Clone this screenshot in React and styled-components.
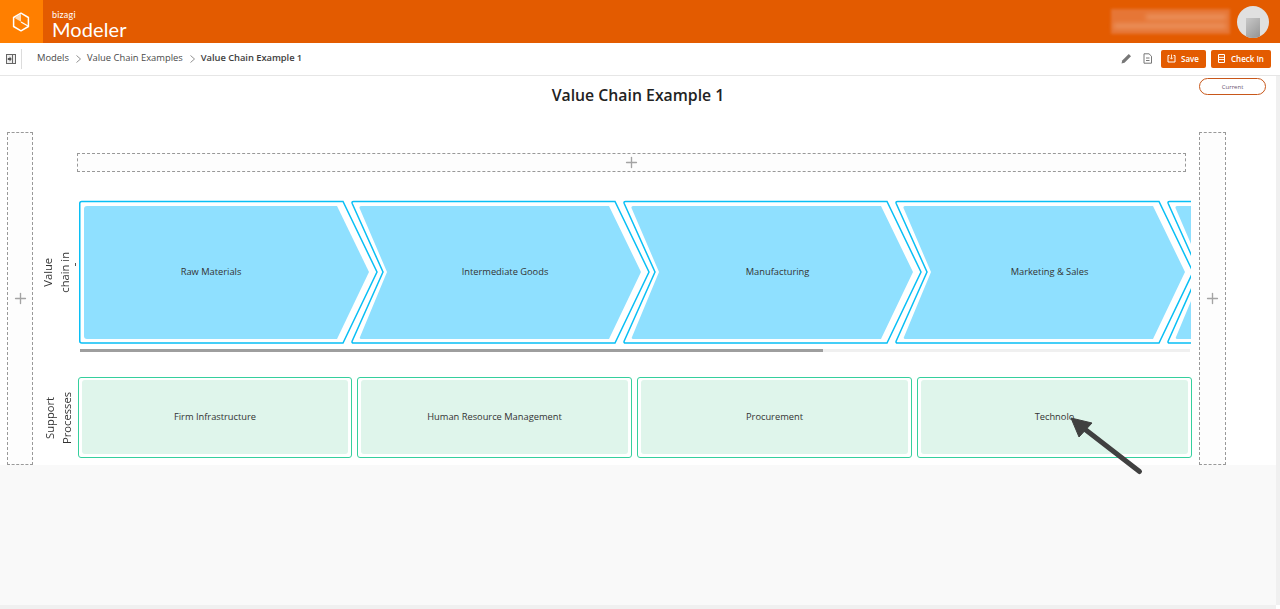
import React from "react";
import styled, { createGlobalStyle } from "styled-components";
import { Plus } from "lucide-react";

const Global = createGlobalStyle`
  html, body { margin: 0; padding: 0; height: 100%; overflow: hidden; background: #fff; }
  body { font-family: "Open Sans", "Liberation Sans", sans-serif; color: #333; }
  * { box-sizing: border-box; }
`;

const Page = styled.div`
  width: 1280px; height: 609px; display: flex; flex-direction: column; overflow: hidden;
`;
const Header = styled.header`
  flex: 0 0 43px; display: flex; align-items: stretch; background: #e35b00;
`;
const LogoBox = styled.div`
  width: 43px; background: #ff7f00; display: flex; align-items: center; justify-content: center; padding-right: 2px;
`;
const Brand = styled.div`
  margin-left: 9px; display: flex; flex-direction: column; color: #fff; padding-top: 10px;
`;
const BrandTop = styled.span`
  font-family: "Lato", sans-serif; font-size: 9px; line-height: 9px; letter-spacing: 0.2px;
`;
const BrandName = styled.span`
  font-family: "Lato", sans-serif; font-size: 20px; line-height: 20px; letter-spacing: 0.1px;
`;
const UserArea = styled.div`
  margin-left: auto; display: flex; align-items: center; padding-right: 11px; gap: 7px;
`;
const BlurName = styled.div`
  width: 119px; height: 25px; background: #e67636; filter: blur(1.5px);
  display: flex; flex-direction: column; align-items: flex-end; justify-content: center; gap: 5px; padding-right: 4px;
`;
const BlurLine = styled.div`
  height: ${(p) => p.$h}px; width: ${(p) => p.$w}px; background: #ec9a68; filter: blur(2px);
`;
const Avatar = styled.div`
  width: 32px; height: 32px; border-radius: 50%; background: #e0e0e0;
  display: flex; align-items: flex-end; justify-content: center; overflow: hidden;
`;
const AvatarInner = styled.div`
  width: 14px; height: 20px; background: linear-gradient(135deg, #c8c8c8, #949494);
`;

const Toolbar = styled.div`
  flex: 0 0 33px; display: flex; align-items: center; border-bottom: 1px solid #e6e6e6; background: #fff;
  padding: 0 9px 1px 6px; position: relative;
`;
const Divider = styled.div`
  width: 1px; height: 20px; background: #dcdcdc; margin: 0 15px 0 5px;
`;
const Crumbs = styled.nav`
  display: flex; align-items: center; font-size: 9.4px; color: #4a4a4a; padding-bottom: 2px;
`;
const Crumb = styled.span`
  font-weight: ${(p) => (p.$active ? 600 : 400)};
  color: ${(p) => (p.$active ? "#3e3e3e" : "#4a4a4a")};
  letter-spacing: ${(p) => (p.$active ? "-0.05px" : "0")};
`;
const Sep = styled.svg`
  width: 5px; height: 8px; margin: 3px 6px 0 7px; flex: none;
`;
const Actions = styled.div`
  margin-left: auto; display: flex; align-items: center;
`;
const ActionIcon = styled.svg`
  width: 11px; height: 11px; margin-right: ${(p) => p.$mr}px; flex: none;
`;
const OrangeBtn = styled.button`
  height: 18px; width: ${(p) => p.$w}px; margin-left: ${(p) => p.$ml || 0}px; border: 0; border-radius: 2px;
  background: #e35b00; color: #fff; font: 600 8px "Open Sans", sans-serif; padding: 0 0 1px ${(p) => p.$pl}px;
  display: flex; align-items: center; gap: ${(p) => p.$gap}px;
`;

const Body = styled.div`
  flex: 1; display: grid; grid-template-columns: 1fr 4px; grid-template-rows: 1fr 4px; background: #fff;
`;
const ScrollRight = styled.div` background: #f0f0f0; `;
const ScrollBottom = styled.div` background: #f0f0f0; `;
const Corner = styled.div` background: #fff; `;
const Stage = styled.main`
  background: #f9f9f9; display: flex; flex-direction: column;
`;
const Canvas = styled.section`
  height: 389px; background: #fff; position: relative; display: flex; flex-direction: column;
`;
const TitleRow = styled.div`
  flex: 0 0 56px; display: flex; justify-content: center; padding-top: 8px;
`;
const Title = styled.h1`
  margin: 0; font-size: 15.8px; line-height: 22px; font-weight: 600; color: #222;
`;
const Pill = styled.div`
  position: absolute; left: 1199px; top: 2px; width: 67px; height: 17px; border: 1px solid #c8571a; border-radius: 9px;
  font-size: 6px; color: #6b5570; display: flex; align-items: center; justify-content: center;
`;
const Board = styled.div`
  flex: 1; display: flex; padding: 0 50px 0 7px;
`;
const Rail = styled.div`
  flex: 0 0 ${(p) => p.$w}px; border: 1px dashed #999; background: #fdfdfd; color: #a4a4a4;
  display: flex; align-items: center; justify-content: center;
`;
const Center = styled.div`
  flex: 1; display: flex; flex-direction: column; padding-top: 21px;
`;
const TopSlot = styled.div`
  height: 19px; width: 1109px; margin-left: 44px; border: 1px dashed #999; background: #fdfdfd; color: #a4a4a4;
  display: flex; align-items: center; justify-content: center;
`;
const Lane = styled.div`
  display: flex; margin-top: ${(p) => p.$mt}px; position: relative;
`;
const LaneHead = styled.div`
  flex: 0 0 45px; display: flex; align-items: center; justify-content: center; padding-left: ${(p) => p.$pl}px;
  padding-bottom: ${(p) => p.$pb || 0}px;
`;
const VLabel = styled.div`
  writing-mode: vertical-rl; transform: rotate(180deg); font-size: 11.2px; line-height: 16.5px; text-align: center; color: #333; white-space: nowrap;
`;
const StrayDash = styled.span`
  position: absolute; left: 42px; top: 63px; width: 1px; height: 3px; background: #555;
`;
const ValueArea = styled.div`
  width: 1112px; margin-left: 1px; overflow: hidden; display: flex; flex-direction: column;
`;
const ChevronRow = styled.div`
  display: flex; height: 146px;
`;
const ChevronItem = styled.div`
  flex: 0 0 272px; display: grid; height: 146px;
  & > * { grid-area: 1 / 1; }
`;
const ChevronSvg = styled.svg`
  width: 272px; height: 146px; overflow: visible; display: block;
`;
const ChevronText = styled.span`
  align-self: center; justify-self: center; font-size: 9.3px; color: #333; padding-bottom: 4px; z-index: 1; white-space: nowrap;
  margin-left: ${(p) => p.$ml}px;
`;
const HScroll = styled.div`
  height: 3px; margin: 3px 1px 0 1px; background: #f0f0f0; display: flex;
`;
const HThumb = styled.div`
  width: 743px; background: #9e9e9e;
`;
const Cards = styled.div`
  width: 1114px; display: grid; grid-template-columns: 274px repeat(3, 275px); gap: 5px;
`;
const Card = styled.div`
  height: 81px; border: 1px solid #35cf9d; border-radius: 3px; padding: 2px 3px 3px; background: #fff; display: flex;
`;
const CardInner = styled.div`
  flex: 1; background: #dff5eb; border-radius: 3px; display: flex; align-items: center; justify-content: center;
  font-size: 9.3px; color: #333; padding-bottom: 2px;
`;
const Pointer = styled.svg`
  position: absolute; left: 0; top: 0; width: 1276px; height: 440px; pointer-events: none; overflow: visible; z-index: 5;
`;

const Chev1 = () => (
  <ChevronSvg viewBox="0 0 272 146">
    <path d="M0.75 3.5Q0.75 1.5 2.75 1.5H264L298 72L264 143H2.75Q0.75 143 0.75 141Z" fill="#fff" stroke="#09bff5" strokeWidth="1.5" />
    <path d="M5 9Q5 6 8 6H258L290 72L258 139H8Q5 139 5 136Z" fill="#8fe0ff" />
  </ChevronSvg>
);
const ChevN = () => (
  <ChevronSvg viewBox="0 0 272 146">
    <path d="M2.5 1.5H264L298 72L264 143H2.5Q0.5 143 1.2 141L32 72L1.2 3.5Q0.5 1.5 2.5 1.5Z" fill="#fff" stroke="#09bff5" strokeWidth="1.5" />
    <path d="M10.5 6H258L290 72L258 139H10.5Q8 139 9 137L36 72L8.5 8Q8 6 10.5 6Z" fill="#8fe0ff" />
  </ChevronSvg>
);

const SepIcon = () => (
  <Sep viewBox="0 0 5 8"><path d="M0.5 0.5L4.5 4L0.5 7.5" fill="none" stroke="#777" strokeWidth="0.8" /></Sep>
);

export default function App() {
  return (
    <Page>
      <Global />
      <Header>
        <LogoBox>
          <svg width="18" height="20" viewBox="0 0 18 20">
            <path d="M9 1.2L16.4 5.5V14.5L9 18.8L1.6 14.5V5.5Z" fill="none" stroke="#fff" strokeWidth="1.5" strokeLinejoin="round" />
            <path d="M9 1.8V9.8L3 6.3L4 4.7Z" fill="#ffd9b0" />
            <path d="M9 10L16 14" stroke="#fff" strokeWidth="1.2" />
          </svg>
        </LogoBox>
        <Brand>
          <BrandTop>bizagi</BrandTop>
          <BrandName>Modeler</BrandName>
        </Brand>
        <UserArea>
          <BlurName>
            <BlurLine $w={80} $h={4} />
            <BlurLine $w={112} $h={4} />
          </BlurName>
          <Avatar><AvatarInner /></Avatar>
        </UserArea>
      </Header>
      <Toolbar>
        <svg width="10" height="10" viewBox="0 0 10 10">
          <rect x="0.5" y="0.5" width="9" height="9" fill="#eee" stroke="#666" />
          <path d="M6.5 0.5V9.5" stroke="#666" />
          <path d="M1.8 4H3.6V2.6L5.8 5L3.6 7.4V6H1.8Z" fill="#555" />
        </svg>
        <Divider />
        <Crumbs>
          <Crumb>Models</Crumb>
          <SepIcon />
          <Crumb>Value Chain Examples</Crumb>
          <SepIcon />
          <Crumb $active>Value Chain Example 1</Crumb>
        </Crumbs>
        <Actions>
          <ActionIcon $mr={10} viewBox="0 0 11 11">
            <path d="M0.5 10.5L1.2 7.5L7.8 1L10 3.2L3.5 9.8Z" fill="#777" />
          </ActionIcon>
          <ActionIcon $mr={8} viewBox="0 0 11 11">
            <path d="M2 0.8H7L9.5 3.2V10.2H2Z" fill="#fff" stroke="#777" strokeWidth="1" />
            <path d="M4 5H7.5M4 7.5H7.5" stroke="#777" strokeWidth="1" />
          </ActionIcon>
          <OrangeBtn $w={45} $pl={6} $gap={5}>
            <svg width="9" height="9" viewBox="0 0 9 9">
              <path d="M2.5 1.5H1V8H8V1.5H6.5" fill="none" stroke="#fff" strokeWidth="1" />
              <path d="M4.5 0.5V5M3 3.6L4.5 5.2L6 3.6" fill="none" stroke="#ffe0c8" strokeWidth="1" />
            </svg>
            Save
          </OrangeBtn>
          <OrangeBtn $w={60} $ml={5} $pl={7} $gap={6}>
            <svg width="7" height="9" viewBox="0 0 7 9">
              <path d="M0.5 0.5H6.5V8.5H0.5Z" fill="none" stroke="#fff" strokeWidth="1" />
              <path d="M1 3.3H6M1 5.6H6" stroke="#fff" strokeWidth="1" />
            </svg>
            Check In
          </OrangeBtn>
        </Actions>
      </Toolbar>
      <Body>
        <Stage>
          <Canvas>
            <TitleRow><Title>Value Chain Example 1</Title></TitleRow>
            <Pill>Current</Pill>
            <Board>
              <Rail $w={26}><Plus size={17} strokeWidth={1.9} /></Rail>
              <Center>
                <TopSlot><Plus size={17} strokeWidth={1.9} /></TopSlot>
                <Lane $mt={28}>
                  <LaneHead $pl={1} $pb={7}><VLabel>Value<br />chain in</VLabel></LaneHead>
                  <StrayDash />
                  <ValueArea>
                    <ChevronRow>
                      <ChevronItem><Chev1 /><ChevronText $ml={-8}>Raw Materials</ChevronText></ChevronItem>
                      <ChevronItem><ChevN /><ChevronText $ml={36}>Intermediate Goods</ChevronText></ChevronItem>
                      <ChevronItem><ChevN /><ChevronText $ml={37}>Manufacturing</ChevronText></ChevronItem>
                      <ChevronItem><ChevN /><ChevronText $ml={37}>Marketing &amp; Sales</ChevronText></ChevronItem>
                      <ChevronItem><ChevN /></ChevronItem>
                    </ChevronRow>
                    <HScroll><HThumb /></HScroll>
                  </ValueArea>
                </Lane>
                <Lane $mt={25}>
                  <LaneHead $pl={5}><VLabel>Support<br />Processes</VLabel></LaneHead>
                  <Cards>
                    <Card><CardInner>Firm Infrastructure</CardInner></Card>
                    <Card><CardInner>Human Resource Management</CardInner></Card>
                    <Card><CardInner>Procurement</CardInner></Card>
                    <Card><CardInner>Technolo</CardInner></Card>
                  </Cards>
                </Lane>
              </Center>
              <Rail $w={27}><Plus size={17} strokeWidth={1.9} /></Rail>
            </Board>
            <Pointer viewBox="0 76 1276 440">
              <path d="M1139.5 471.5L1082 427" stroke="#404040" strokeWidth="5" strokeLinecap="round" />
              <path d="M1071 418L1092 423L1079 437Z" fill="#404040" stroke="#404040" strokeWidth="1" strokeLinejoin="round" />
            </Pointer>
          </Canvas>
        </Stage>
        <ScrollRight />
        <ScrollBottom />
        <Corner />
      </Body>
    </Page>
  );
}
